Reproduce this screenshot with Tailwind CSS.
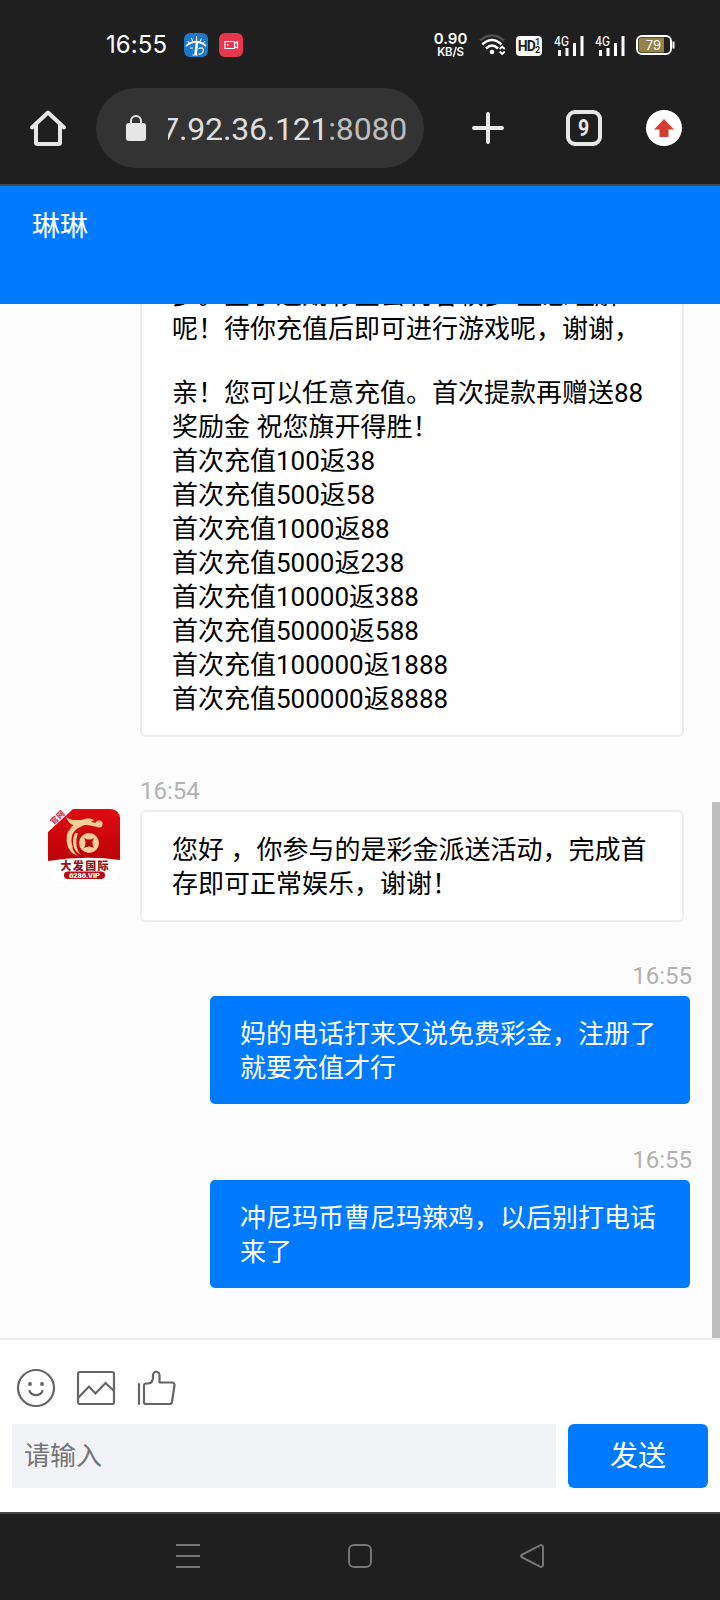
<!DOCTYPE html>
<html lang="zh-CN">
<head>
<meta charset="utf-8">
<title>琳琳</title>
<script src="https://cdn.jsdelivr.net/npm/@tailwindcss/browser@4"></script>
</head>
<body class="w-[720px] h-[1600px] overflow-hidden flex flex-col bg-white font-['Roboto','Noto_Sans_CJK_SC',sans-serif]">

<!-- status bar -->
<header class="h-[186px] shrink-0 bg-[#1f1f1f] border-b-2 border-[#454749] flex flex-col">
  <div class="h-[88px] flex items-center pt-[2px] pl-[106px] text-white">
    <div class="text-[24px] leading-none w-[78px] font-['Inter'] tracking-[0.1px] whitespace-nowrap">16:55</div>
    <svg class="w-6 h-6" viewBox="0 0 24 24"><rect width="24" height="24" rx="6" fill="#1b78cc"/><path d="M2 13Q12 4.500 22 13" stroke="#fff" stroke-width="1.700" fill="none"/><path d="M12.500 8V3M9 9L7.500 5M16 9l1.500-4M5.500 10.500L3.500 8M19 10.500L21 8" stroke="#fff" stroke-width="1"/><path d="M13 9L11.500 22" stroke="#fff" stroke-width="2.600"/><path d="M8.500 22h5M14.500 15.500c4-1.500 6 .5 4.500 3.300-1 2-3 2.700-4.500 2.200M6 15h3" stroke="#fff" stroke-width="1.200" fill="none"/></svg>
    <svg class="w-6 h-6 ml-[11px]" viewBox="0 0 24 24"><rect width="24" height="24" rx="6" fill="#e8364e"/><path d="M6 8.500h9.500v7H6zM15.500 10.500L18.500 9v6l-3-1.500M8.700 11v2" stroke="#fff" stroke-width="1.200" fill="none"/></svg>
    <div class="ml-[190px] w-[35px] flex flex-col items-center font-['Inter'] font-semibold whitespace-nowrap">
      <div class="text-[15px] leading-[14px]">0.90</div>
      <div class="text-[11.500px] leading-[12px] tracking-[-0.200px]">KB/S</div>
    </div>
    <svg class="w-7 h-6 ml-[11px]" viewBox="0 0 28 24" fill="none" stroke-linecap="butt"><path d="M1 7.500Q13 -2.500 25 7.500" stroke="#4d4d4d" stroke-width="2.400"/><path d="M3.300 11.500Q13 2.500 22.500 11.500M7 15.500Q13 9.500 19 15.500" stroke="#fff" stroke-width="2.500"/><circle cx="13" cy="19" r="2.300" fill="#fff"/><path d="M20.700 16l2.500-2.500 2.500 2.500M20.700 18.500l2.500 2.500 2.500-2.500" stroke="#fff" stroke-width="1.800"/></svg>
    <div class="ml-[9px] w-[26px] h-5 mt-[2px] rounded-[4px] bg-white text-[#1f1f1f] flex items-center justify-center font-bold"><span class="text-[14px] leading-none tracking-[-0.800px]">HD</span><span class="text-[9px] leading-[8px] flex flex-col"><span>1</span><span>2</span></span></div>
    <svg class="w-[30px] h-[22px] ml-[12px] mt-[1px]" viewBox="0 0 30 22"><text x="0" y="10.500" font-size="12.500" font-family="Inter" font-weight="500" fill="#fff" textLength="15" lengthAdjust="spacingAndGlyphs">4G</text><path d="M5.500 21v-6M13 21v-8M20.500 21v-13M28 21v-20" stroke="#fff" stroke-width="3"/></svg>
    <svg class="w-[30px] h-[22px] ml-[11px] mt-[1px]" viewBox="0 0 30 22"><text x="0" y="10.500" font-size="12.500" font-family="Inter" font-weight="500" fill="#fff" textLength="15" lengthAdjust="spacingAndGlyphs">4G</text><path d="M5.500 21v-6M13 21v-8M20.500 21v-13M28 21v-20" stroke="#fff" stroke-width="3"/></svg>
    <svg class="w-10 h-5 ml-[11px]" viewBox="0 0 40 20"><rect x="1" y="1" width="34" height="18" rx="5" fill="none" stroke="#fff" stroke-width="2"/><path d="M28 2.500H6.500a4 4 0 0 0-4 4v7a4 4 0 0 0 4 4H28z" fill="#958245"/><path d="M36.500 6.500h2v7h-2z" fill="#fff"/><text x="17.500" y="14.700" text-anchor="middle" font-size="13" font-family="Inter" fill="#fff">79</text></svg>
  </div>
  <!-- address bar -->
  <div class="h-20 flex items-center pl-[30px]">
    <svg class="w-9 h-9" viewBox="0 0 36 36" fill="none" stroke="#e6e6e6" stroke-width="4" stroke-linejoin="round" stroke-linecap="round"><path d="M2 17.500L18 2.500 34 17.500M6 15v17.500a1.500 1.500 0 0 0 1.500 1.500h21a1.500 1.500 0 0 0 1.500-1.500V15"/></svg>
    <div class="ml-[30px] w-[328px] h-20 rounded-full bg-[#333] flex items-center pl-[30px]">
      <svg class="w-5 h-[26px]" viewBox="0 0 20 26"><rect y="8" width="20" height="18" rx="3" fill="#e6e6e6"/><path d="M5 9V6a5 5 0 0 1 10 0v3" fill="none" stroke="#e6e6e6" stroke-width="2"/></svg>
      <div class="ml-[22px] w-[242px] overflow-hidden flex justify-end text-[32px] leading-10 tracking-[-0.200px] whitespace-nowrap text-[#dedede] pr-[3px] pt-px"><span>7.92.36.121</span><span class="text-[#bdbdbd]">:8080</span></div>
    </div>
    <svg class="w-8 h-8 ml-[48px]" viewBox="0 0 32 32"><path d="M16 2v28M2 16h28" stroke="#e8e8e8" stroke-width="4" stroke-linecap="round"/></svg>
    <div class="ml-[62px] w-9 h-9 rounded-[9px] border-4 border-[#e6e6e6] text-[#e6e6e6] flex items-center justify-center text-[23px] leading-none font-bold"><span class="scale-x-[.85]">9</span></div>
    <svg class="w-9 h-9 ml-[44px]" viewBox="0 0 36 36"><circle cx="18" cy="18" r="18" fill="#fff"/><path d="M18 9L28 19.500h-5.500V27h-9v-7.500H8z" fill="#d63c2f"/></svg>
  </div>
</header>

<div class="h-[118px] shrink-0 bg-[#007aff] text-white text-[28px] leading-10 pl-8 pt-[21px]">琳琳</div>

<!-- message list, scrolled to the bottom -->
<main class="h-[1034px] shrink-0 bg-[#fcfcfc] overflow-hidden relative flex flex-col justify-end pb-[50px] text-[26px] leading-[34px] text-black">
  <div class="ml-[140px] w-[544px] bg-white border-2 border-[#eee] rounded-md px-[30px] pt-5 pb-[19px] whitespace-nowrap">
    <p>多。鉴于近期彩金套利者较多 望您理解<br>呢！待你充值后即可进行游戏呢，谢谢，</p>
    <p class="mt-[30px]">亲！您可以任意充值。首次提款再赠送88<br>奖励金 祝您旗开得胜！<br>首次充值100返38<br>首次充值500返58<br>首次充值1000返88<br>首次充值5000返238<br>首次充值10000返388<br>首次充值50000返588<br>首次充值100000返1888<br>首次充值500000返8888</p>
  </div>
  <div class="flex mt-[36px] pl-12">
    <svg class="w-[72px] h-[72px] mt-[36px] mr-5" viewBox="0 0 72 72"><defs><clipPath id="tile"><rect width="72" height="72" rx="9"/></clipPath><linearGradient id="red" x2="0" y2="1"><stop stop-color="#df0b10"/><stop offset="1" stop-color="#bb0308"/></linearGradient></defs><g clip-path="url(#tile)"><rect width="72" height="72" fill="#fff"/><path d="M25 0H72V51Q36 46 0 52V23z" fill="url(#red)"/><g transform="rotate(-43 9 8)"><text x="1" y="11.500" font-size="8" font-weight="700" fill="#c9272b" font-family="Noto Sans CJK SC">官网</text></g><path d="M18 8c5 4 10 3 16 3 4-2 9-2 12 0l-3 2 6 1c3 0 3-1.500 5.500-.5-1 3-5 4.500-8 4-5-1-9-3-13 0-9 3-13 12-8 22-7-7-7-18 0-23.500-4-1-5.500-4-7.500-8z" fill="#f5ce98"/><path d="M20 22c-4 13 1 22 10 25-6-5-9-14-5-25zM27 24c-4 9-2 18 6 22-5-5-6-14-3-22z" fill="#f5ce98"/><circle cx="41" cy="34" r="10" fill="#f8cf9c"/><circle cx="51" cy="15" r="2.500" fill="none" stroke="#f5ce98" stroke-width="2"/><path d="M36 29q5 3 10 0-3 5 0 10-5-3-10 0 3-5 0-10" fill="#bd080c"/><text x="12.500" y="60.500" font-size="11" font-weight="900" fill="#8f171a" font-family="Noto Sans CJK SC" textLength="48">大发国际</text><rect x="16" y="62.500" width="41" height="7.500" rx="3.700" fill="#bc0c12"/><text x="36.500" y="69" text-anchor="middle" font-size="7.500" font-weight="900" fill="#fff" font-family="Roboto" textLength="31">6286.VIP</text></g></svg>
    <div>
      <div class="text-[24px] leading-[34px] pt-px mb-[2px] text-[#b2b2b2]">16:54</div>
      <div class="w-[544px] h-[112px] bg-white border-2 border-[#eee] rounded-md px-[30px] pt-[21px] whitespace-nowrap">您好 ，你参与的是彩金派送活动，完成首<br>存即可正常娱乐，谢谢！</div>
    </div>
  </div>
  <div class="flex flex-col items-end mt-[37px] pr-[30px]">
    <div class="text-[24px] leading-[34px] text-[#b2b2b2] -mr-[2px]">16:55</div>
    <div class="mt-[3px] w-[480px] h-[108px] bg-[#007aff] text-white rounded-[5px] px-[30px] pt-[21px] whitespace-nowrap">妈的电话打来又说免费彩金，注册了<br>就要充值才行</div>
  </div>
  <div class="flex flex-col items-end mt-[39px] pr-[30px]">
    <div class="text-[24px] leading-[34px] text-[#b2b2b2] -mr-[2px]">16:55</div>
    <div class="mt-[3px] w-[480px] h-[108px] bg-[#007aff] text-white rounded-[5px] px-[30px] pt-[21px] whitespace-nowrap">冲尼玛币曹尼玛辣鸡，以后别打电话<br>来了</div>
  </div>
  <div class="absolute right-0 bottom-0 w-2 h-[536px] bg-[#bebebe]"></div>
</main>

<!-- composer -->
<section class="h-[174px] shrink-0 bg-white border-t-2 border-[#eee] px-3 flex flex-col">
  <div class="h-[84px] flex items-center pt-[12px] pl-1 gap-5 text-[#666]">
    <svg class="w-10 h-10" viewBox="0 0 40 40" fill="none" stroke="currentColor" stroke-width="2.200"><circle cx="20" cy="20" r="18"/><circle cx="14" cy="16" r="2" fill="currentColor" stroke="none"/><circle cx="26" cy="16" r="2" fill="currentColor" stroke="none"/><path d="M13.500 23c2.500 5.500 10.500 5.500 13 0" stroke-linecap="round"/></svg>
    <svg class="w-10 h-10" viewBox="0 0 40 40" fill="none" stroke="currentColor" stroke-width="2.200"><rect x="2" y="4" width="36" height="32" rx="2"/><path d="M2 30L13 18.500l6.500 7L29.500 15 38 23"/></svg>
    <svg class="w-10 h-10" viewBox="0 0 40 40" fill="none" stroke="currentColor" stroke-width="2.200" stroke-linejoin="round" stroke-linecap="round"><path d="M3 16v20M8 34V17.500a2 2 0 0 1 2-2h2q5-.5 5-6V7a3 3 0 0 1 6.500 0v7.500H36a2.500 2.500 0 0 1 2.500 3L36 34a2.500 2.500 0 0 1-2.500 2H10a2 2 0 0 1-2-2z"/></svg>
  </div>
  <div class="flex gap-3">
    <div class="w-[544px] h-16 bg-[#f1f3f7] text-[#757575] text-[26px] leading-[64px] pl-3">请输入</div>
    <div class="w-[140px] h-16 bg-[#007aff] text-white text-[28px] leading-[65px] rounded-md text-center">发送</div>
  </div>
</section>

<nav class="h-[88px] shrink-0 bg-[#1f1f1f] border-t-2 border-[#454545] flex items-center pl-44 pb-[2px] text-[#757575]">
  <svg class="w-6 h-6" viewBox="0 0 24 24" stroke="currentColor" stroke-width="2"><path d="M0 1h24M0 12h24M0 23h24"/></svg>
  <svg class="w-6 h-6 ml-[148px]" viewBox="0 0 24 24" fill="none" stroke="currentColor" stroke-width="2"><rect x="1" y="1" width="22" height="22" rx="5"/></svg>
  <svg class="w-6 h-6 ml-[148px]" viewBox="0 0 24 24" fill="none" stroke="currentColor" stroke-width="2" stroke-linejoin="round"><path d="M1.500 11L20 1.300a2 2 0 0 1 3 1.700v18a2 2 0 0 1-3 1.700L1.500 13a1.200 1.200 0 0 1 0-2z"/></svg>
</nav>
</body>
</html>
